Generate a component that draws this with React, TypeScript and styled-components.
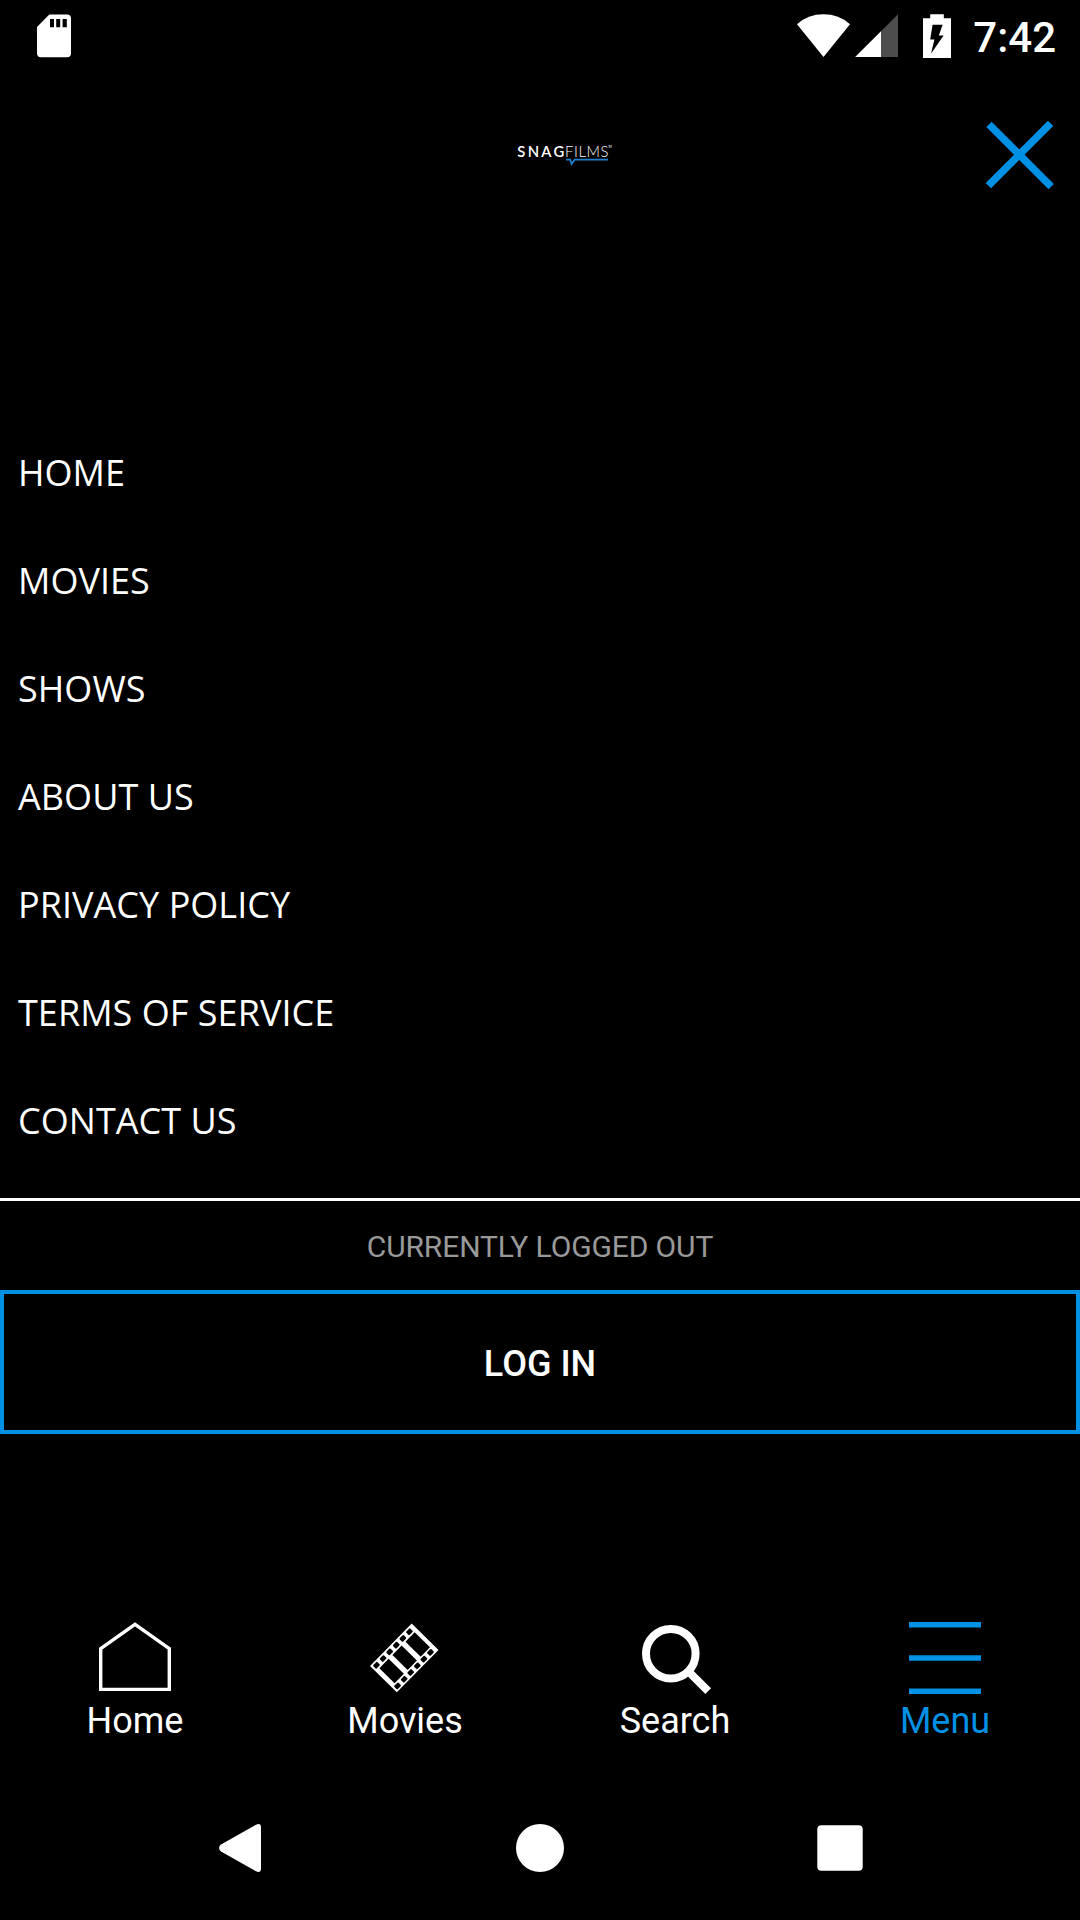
import React from "react";
import styled, { createGlobalStyle } from "styled-components";

const BLUE = "#0090e4";

const GlobalStyle = createGlobalStyle`
  html, body { margin: 0; background: #000; }
  * { box-sizing: border-box; }
  svg { display: block; flex: none; }
`;

const Screen = styled.div`
  width: 1080px;
  height: 1920px;
  display: flex;
  flex-direction: column;
  background: #000;
  color: #fff;
  font-family: Roboto, "Liberation Sans", sans-serif;
  overflow: hidden;
`;

const StatusBar = styled.header`
  height: 72px;
  padding: 0 24px 0 36px;
  display: flex;
  align-items: center;
  justify-content: space-between;
`;

const StatusIcons = styled.div`
  display: flex;
  align-items: center;
`;

const Clock = styled.time`
  margin-left: 20px;
  font-size: 42px;
  line-height: 50px;
  padding-top: 4px;
  font-weight: 500;
`;

const Header = styled.div`
  height: 365px;
  padding: 48px 26px 0 516px;
  display: flex;
  justify-content: space-between;
  align-items: flex-start;
`;

const Logo = styled.div`
  width: 100px;
  padding-top: 21px;
`;

const CloseButton = styled.button`
  padding: 0;
  border: 0;
  background: none;
`;

const MenuList = styled.nav`
  height: 764px;
  padding-left: 18px;
  display: flex;
  flex-direction: column;
  border-bottom: 3px solid #fff;
`;

const MenuItem = styled.a`
  height: 108px;
  line-height: 72px;
  font-family: "Open Sans", "Noto Sans", sans-serif;
  font-size: 36px;
  letter-spacing: 0.04px;
  color: #fff;
`;

const LoginState = styled.p`
  margin: 0;
  height: 89px;
  line-height: 92px;
  text-align: center;
  font-size: 30px;
  letter-spacing: -0.12px;
  color: #999;
`;

const LoginButton = styled.button`
  height: 144px;
  padding: 4px 0 0;
  border: 4px solid ${BLUE};
  background: #000;
  color: #fff;
  font-family: inherit;
  font-size: 36px;
  font-weight: 500;
`;

const TabBar = styled.nav`
  margin-top: 182px;
  height: 160px;
  display: grid;
  grid-template-columns: repeat(4, 1fr);
`;

const Tab = styled.a<{ $active?: boolean }>`
  display: flex;
  flex-direction: column;
  align-items: center;
  color: ${(p) => (p.$active ? BLUE : "#fff")};
`;

const TabLabel = styled.span`
  font-size: 36px;
  line-height: 42px;
`;

const SystemBar = styled.footer`
  height: 144px;
  display: flex;
  align-items: center;
  justify-content: center;
  gap: 252px;
`;

const HomeIcon = () => (
  <svg width="80" height="84" viewBox="95 1616 80 84" fill="none" stroke="currentColor" strokeWidth="3.4">
    <path d="M100.7 1689.4V1648.6L135 1624.4L169.3 1648.6V1689.4Z" />
  </svg>
);

const FilmIcon = () => {
  const frames = [5, 23.6, 42.2];
  const holes = [2.2, 11.6, 21, 30.4, 39.8, 49.2];
  return (
    <svg width="80" height="84" viewBox="365 1616 80 84">
      <g transform="translate(370 1666) rotate(-45.5)">
        <rect width="59.5" height="37.6" fill="currentColor" />
        {frames.map((x) => (
          <rect key={x} x={x} y="8.2" width="13.2" height="21.4" fill="#000" />
        ))}
        {holes.map((x) => (
          <g key={x} fill="#000">
            <rect x={x} y="1.7" width="5.8" height="4.8" rx="1" />
            <rect x={x} y="31.2" width="5.8" height="4.8" rx="1" />
          </g>
        ))}
      </g>
    </svg>
  );
};

const SearchIcon = () => (
  <svg width="80" height="84" viewBox="635 1616 80 84" fill="none" stroke="currentColor" strokeWidth="8">
    <circle cx="670.8" cy="1653.7" r="24.8" />
    <path d="M688 1671L708.2 1691.2" />
  </svg>
);

const MenuIcon = () => (
  <svg width="80" height="84" viewBox="905 1616 80 84" fill="currentColor">
    <path d="M909 1622h72v5.6h-72zM909 1655.2h72v5.6h-72zM909 1688.4h72v5.6h-72z" />
  </svg>
);

const menu = ["HOME", "MOVIES", "SHOWS", "ABOUT US", "PRIVACY POLICY", "TERMS OF SERVICE", "CONTACT US"];

const tabs = [
  { label: "Home", Icon: HomeIcon },
  { label: "Movies", Icon: FilmIcon },
  { label: "Search", Icon: SearchIcon },
  { label: "Menu", Icon: MenuIcon, active: true },
];

export default function App() {
  return (
    <Screen>
      <GlobalStyle />
      <StatusBar>
        <svg width="36" height="72" viewBox="36 0 36 72">
          <path fill="#fff" d="M49.3 14.4H67a4 4 0 0 1 4 4V53.3a4 4 0 0 1-4 4H41a4 4 0 0 1-4-4V27Z" />
          <path d="M50 19h4v8.3h-4zM56.2 19h4v8.3h-4zM62.6 19h4.2v8.3h-4.2z" />
        </svg>
        <StatusIcons>
          <svg width="158" height="72" viewBox="795 0 158 72" fill="#fff">
            <path d="M823.5 57L797 24.2Q808 14.3 823.5 14.3T850 24.2Z" />
            <path d="M898 14.2V57H855.2Z" fill="#4d4d4d" />
            <path d="M881 31.2V57H855.2Z" />
            <path d="M930.2 14.2h13.6v4h7.2v39.7h-28V18.2h7.2z" />
            <path fill="#000" d="M932.6 24.7H942.6L938.8 35.5H943.6L931 53.7L934.4 39.5H930.2Z" />
          </svg>
          <Clock>7:42</Clock>
        </StatusIcons>
      </StatusBar>
      <Header>
        <Logo>
          <svg width="100" height="26" viewBox="516 141 100 26" fontFamily="Lato, sans-serif" fill="#fff">
            <text x="517.3" y="157" fontSize="14.8" fontWeight="600" textLength="47">SNAG</text>
            <text x="565" y="157" fontSize="14.8" fontWeight="300" textLength="43.5">FILMS</text>
            <text x="608.2" y="148.3" fontSize="2.8" textLength="3.6">TM</text>
            <path d="M566 159.7H570.2L571.6 164L574.6 159.7H608" fill="none" stroke="#1d80c8" strokeWidth="1.8" />
          </svg>
        </Logo>
        <CloseButton aria-label="Close">
          <svg width="70" height="70" viewBox="984 120 70 70" fill="none" stroke={BLUE} strokeWidth="7.6">
            <path d="M989 124.4L1051.2 186.6M1050.6 123.400L988.400 185.600" />
          </svg>
        </CloseButton>
      </Header>
      <MenuList>
        {menu.map((item) => (
          <MenuItem key={item}>{item}</MenuItem>
        ))}
      </MenuList>
      <LoginState>CURRENTLY LOGGED OUT</LoginState>
      <LoginButton>LOG IN</LoginButton>
      <TabBar>
        {tabs.map(({ label, Icon, active }) => (
          <Tab key={label} $active={active}>
            <Icon />
            <TabLabel>{label}</TabLabel>
          </Tab>
        ))}
      </TabBar>
      <SystemBar>
        <svg width="48" height="48" viewBox="216 1824 48 48">
          <path fill="#fff" d="M256 1824.7Q261 1822.5 261 1827.5V1868.5Q261 1873.5 256 1871.3L221 1851.5Q217 1848 221 1844.5Z" />
        </svg>
        <svg width="48" height="48" viewBox="0 0 48 48"><circle cx="24" cy="24" r="24" fill="#fff" /></svg>
        <svg width="48" height="48" viewBox="816 1824 48 48">
          <rect x="817.3" y="1825.2" width="45.4" height="45.6" rx="4" fill="#fff" />
        </svg>
      </SystemBar>
    </Screen>
  );
}
